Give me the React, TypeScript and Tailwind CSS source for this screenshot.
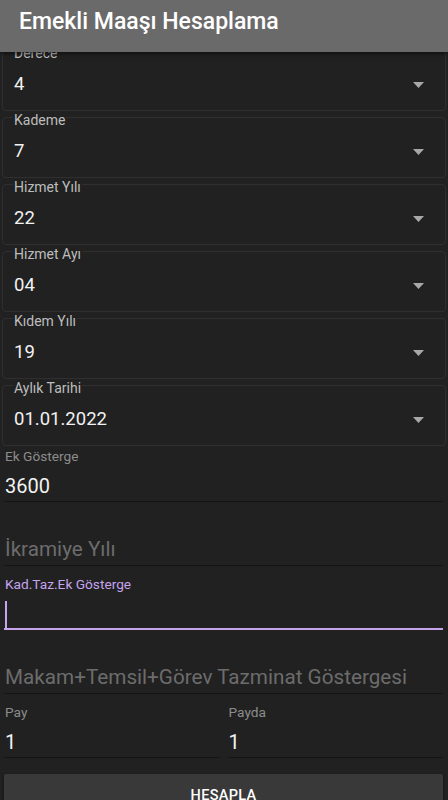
const boxes = [
  { label: "Derece", value: "4" },
  { label: "Kademe", value: "7" },
  { label: "Hizmet Yılı", value: "22" },
  { label: "Hizmet Ayı", value: "04" },
  { label: "Kıdem Yılı", value: "19" },
  { label: "Aylık Tarihi", value: "01.01.2022" },
];

const DropArrow = () => (
  <svg width="11" height="6" viewBox="0 0 11 6" className="shrink-0">
    <path d="M0 0h11L5.5 6z" fill="#a8a8a8" />
  </svg>
);

const SelectBox = ({ label, value }: { label: string; value: string }) => (
  <fieldset className="mx-[2px] h-[67px] rounded-[4px] border border-[#2f2f2f] px-[10px]">
    <legend className="px-[1px] text-[14px] leading-3 text-[#bdbdbd]">
      <span className="relative top-[3px]">{label}</span>
    </legend>
    <div className="flex h-[54px] items-center justify-between pl-[1px] pr-[11px] pt-[3px]">
      <span className="text-[18.5px] text-[#f2f2f2]">{value}</span>
      <DropArrow />
    </div>
  </fieldset>
);

type FieldProps = {
  label?: string;
  value?: string;
  placeholder?: string;
  focused?: boolean;
  first?: boolean;
};

const LineField = ({ label, value, placeholder, focused, first }: FieldProps) => (
  <div
    className={
      focused
        ? "h-[64px] border-b-2 border-[#c6a4ee]"
        : first
          ? "h-[56px] border-b border-[#141414]"
          : "h-[64px] border-b border-[#141414]"
    }
  >
    <div
      className={
        (first ? "mt-[2px] " : "mt-[10px] ") +
        "h-4 pl-[1px] text-[13.7px] leading-4 " +
        (focused ? "text-[#c6a4ee]" : "text-[#8c8c8c]")
      }
    >
      {label}
    </div>
    <div className="mt-[7px] flex h-[30px] items-center pl-[1px]">
      {focused ? (
        <span className="h-[27px] w-[2px] bg-[#c6a4ee]" />
      ) : value ? (
        <span className="text-[20px] text-[#f2f2f2]">{value}</span>
      ) : (
        <span className="text-[20.7px] text-[#6c6c6c]">{placeholder}</span>
      )}
    </div>
  </div>
);

export default function App() {
  return (
    <div
      className="relative h-[800px] w-[448px] overflow-hidden bg-[#212121]"
      style={{ fontFamily: "Roboto, 'Noto Sans', sans-serif" }}
    >
      <header className="absolute inset-x-0 top-0 z-10 h-[52px] bg-[#6a6a6a] pl-[19px] pt-[8px] shadow-[0_2px_4px_rgba(0,0,0,0.5)]">
        <h1 className="text-[23px] font-medium leading-[28px] text-white">Emekli Maaşı Hesaplama</h1>
      </header>

      <main className="pt-[44px]">
        <div className="flex flex-col">
          {boxes.map((b) => (
            <SelectBox key={b.label} label={b.label} value={b.value} />
          ))}
        </div>

        <div className="flex flex-col pl-[4px] pr-[5px]">
          <LineField first label="Ek Gösterge" value="3600" />
          <LineField placeholder="İkramiye Yılı" />
          <LineField focused label="Kad.Taz.Ek Gösterge" />
          <LineField placeholder="Makam+Temsil+Görev Tazminat Göstergesi" />
          <div className="grid grid-cols-2 gap-[8px]">
            <LineField label="Pay" value="1" />
            <LineField label="Payda" value="1" />
          </div>
          <button className="mt-[16px] h-[44px] shrink-0 rounded-[2px] bg-[#393939] text-[14.5px] font-medium tracking-[0.3px] text-white shadow-[0_1px_3px_rgba(0,0,0,0.5)]">
            HESAPLA
          </button>
        </div>
      </main>
    </div>
  );
}
